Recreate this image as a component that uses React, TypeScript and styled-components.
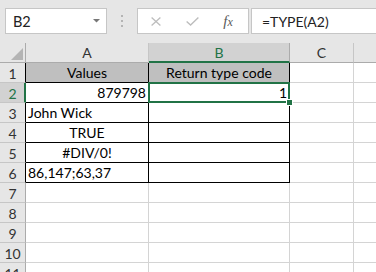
import React from 'react';
import styled, { createGlobalStyle, css } from 'styled-components';

const GlobalStyle = createGlobalStyle`
  html, body { margin: 0; padding: 0; background: #ffffff; }
  body { font-family: Lato, "Liberation Sans", sans-serif; overflow: hidden; }
`;

const GREEN = '#217346';
const GRID = '#d4d4d4';

const Window = styled.div`
  width: 376px;
  height: 272px;
  overflow: hidden;
  background: #ffffff;
`;

const FormulaBar = styled.div`
  display: flex;
  align-items: flex-start;
  height: 43px;
  box-sizing: border-box;
  padding: 8px 0 0 5px;
  background: #e6e6e6;
`;

const NameBox = styled.div`
  box-sizing: border-box;
  flex: 0 0 102px;
  height: 26px;
  border: 1px solid #c6c6c6;
  background: #ffffff;
  display: flex;
  align-items: center;
  justify-content: space-between;
  padding: 0 6px 0 7px;
  font-size: 14.5px;
  color: #222222;
`;

const Grip = styled.div`
  flex: 0 0 30px;
  height: 26px;
  display: flex;
  flex-direction: column;
  align-items: center;
  justify-content: center;
  gap: 3px;
`;

const GripDot = styled.span`
  width: 2px;
  height: 2px;
  background: #b4b4b4;
`;

const ButtonsBox = styled.div`
  box-sizing: border-box;
  flex: 0 0 112px;
  height: 26px;
  border: 1px solid #c6c6c6;
  background: #ffffff;
  display: grid;
  grid-template-columns: 36px 36px 36px;
  align-items: center;
  justify-items: center;
`;

const FxLabel = styled.span`
  font-family: "Liberation Serif", serif;
  font-style: italic;
  color: #5a5a5a;
  font-size: 15px;
  line-height: 1;
  & small {
    font-size: 12px;
  }
`;

const FormulaInput = styled.div`
  box-sizing: border-box;
  flex: 1 0 auto;
  height: 26px;
  margin-left: 2px;
  margin-right: -6px;
  border: 1px solid #c6c6c6;
  background: #ffffff;
  display: flex;
  align-items: center;
  padding-left: 10px;
  font-size: 14px;
  color: #222222;
`;

const Sheet = styled.div`
  display: grid;
  grid-template-columns: 26px 123px 141px 64px 64px;
  grid-auto-rows: 20px;
  font-size: 14px;
`;

const Corner = styled.div`
  box-sizing: border-box;
  background: #e6e6e6;
  border-right: 1px solid #ababab;
  border-bottom: 1px solid #ababab;
  display: flex;
  align-items: flex-end;
  justify-content: flex-end;
  padding: 0 2px 2px 0;
`;

const ColHeader = styled.div<{ $selected?: boolean }>`
  box-sizing: border-box;
  background: #e6e6e6;
  border-right: 1px solid #c6c6c6;
  border-bottom: 1px solid #ababab;
  display: flex;
  align-items: center;
  justify-content: center;
  line-height: 19px;
  color: #333333;
  ${(p) =>
    p.$selected &&
    css`
      background: #d2d2d2;
      color: ${GREEN};
      border-right-color: #ababab;
      border-bottom: 2px solid ${GREEN};
    `}
`;

const RowHeader = styled.div<{ $selected?: boolean; $edge?: string }>`
  box-sizing: border-box;
  background: #e6e6e6;
  border-right: 1px solid ${(p) => p.$edge || '#ababab'};
  border-bottom: 1px solid #c6c6c6;
  display: flex;
  align-items: center;
  justify-content: center;
  line-height: 19px;
  padding-top: 1px;
  color: #333333;
  ${(p) =>
    p.$selected &&
    css`
      background: #d2d2d2;
      color: ${GREEN};
      border-right: 2px solid ${GREEN};
      padding-left: 1px;
    `}
`;

type Align = 'left' | 'center' | 'right';

const Cell = styled.div<{ $align?: Align; $fill?: boolean; $table?: boolean }>`
  position: relative;
  box-sizing: border-box;
  border-right: 1px solid ${(p) => (p.$table ? '#000000' : GRID)};
  border-bottom: 1px solid ${(p) => (p.$table ? '#000000' : GRID)};
  background: ${(p) => (p.$fill ? '#bfbfbf' : '#ffffff')};
  padding: 1px 2px 0;
  line-height: 18px;
  color: #000000;
  white-space: nowrap;
  text-align: ${(p) => p.$align || 'left'};
`;

const Selection = styled.div`
  position: absolute;
  inset: -1px;
  border: 2px solid ${GREEN};
  z-index: 2;
  pointer-events: none;
`;

const FillHandle = styled.span`
  position: absolute;
  right: -5px;
  bottom: -5px;
  width: 5px;
  height: 5px;
  background: ${GREEN};
  border: 1px solid #ffffff;
`;

type Row = { n: number; a?: string; aAlign?: Align; b?: string; bAlign?: Align; fill?: boolean };

const rows: Row[] = [
  { n: 1, a: 'Values', aAlign: 'center', b: 'Return type code', bAlign: 'center', fill: true },
  { n: 2, a: '879798', aAlign: 'right', b: '1', bAlign: 'right' },
  { n: 3, a: 'John Wick', aAlign: 'left' },
  { n: 4, a: 'TRUE', aAlign: 'center' },
  { n: 5, a: '#DIV/0!', aAlign: 'center' },
  { n: 6, a: '86,147;63,37', aAlign: 'left' },
  { n: 7 },
  { n: 8 },
  { n: 9 },
  { n: 10 },
  { n: 11 },
];

const CancelIcon = () => (
  <svg width="10" height="9" viewBox="0 0 10 9">
    <path d="M0.6 0.5 L9.4 8.5 M9.4 0.5 L0.6 8.5" stroke="#bdbdbd" strokeWidth="1.3" fill="none" />
  </svg>
);

const EnterIcon = () => (
  <svg width="13" height="9" viewBox="0 0 13 9">
    <path d="M0.6 4.4 L4.6 8 L12.4 0.6" stroke="#bdbdbd" strokeWidth="1.4" fill="none" />
  </svg>
);

const DropArrow = () => (
  <svg width="7" height="4" viewBox="0 0 7 4">
    <polygon points="0,0 7,0 3.5,3.6" fill="#777777" />
  </svg>
);

const CornerTriangle = () => (
  <svg width="12" height="12" viewBox="0 0 12 12">
    <polygon points="12,0 12,12 0,12" fill="#b4b4b4" />
  </svg>
);

export default function App() {
  return (
    <Window>
      <GlobalStyle />
      <FormulaBar>
        <NameBox>
          <span>B2</span>
          <DropArrow />
        </NameBox>
        <Grip>
          <GripDot />
          <GripDot />
          <GripDot />
        </Grip>
        <ButtonsBox>
          <CancelIcon />
          <EnterIcon />
          <FxLabel>
            f<small>x</small>
          </FxLabel>
        </ButtonsBox>
        <FormulaInput>=TYPE(A2)</FormulaInput>
      </FormulaBar>
      <Sheet>
        <Corner>
          <CornerTriangle />
        </Corner>
        <ColHeader>A</ColHeader>
        <ColHeader $selected>B</ColHeader>
        <ColHeader>C</ColHeader>
        <ColHeader />
        {rows.map((r) => {
          const inTable = r.n <= 6;
          return (
            <React.Fragment key={r.n}>
              <RowHeader $selected={r.n === 2} $edge={inTable ? '#000000' : undefined}>
                {r.n}
              </RowHeader>
              <Cell $table={inTable} $fill={r.fill} $align={r.aAlign}>
                {r.a}
              </Cell>
              <Cell $table={inTable} $fill={r.fill} $align={r.bAlign}>
                {r.b}
                {r.n === 2 && (
                  <Selection>
                    <FillHandle />
                  </Selection>
                )}
              </Cell>
              <Cell />
              <Cell />
            </React.Fragment>
          );
        })}
      </Sheet>
    </Window>
  );
}
